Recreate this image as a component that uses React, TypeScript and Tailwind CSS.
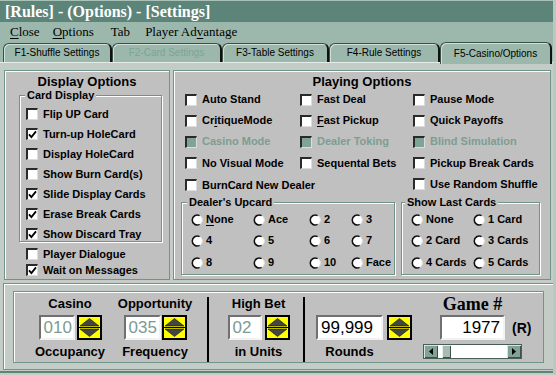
import React from "react";

const SANS = "font-['Liberation_Sans',Arial,sans-serif]";
const SERIF = "font-['Liberation_Serif','Times_New_Roman',serif]";

function CheckBox({ checked = false, disabled = false }: { checked?: boolean; disabled?: boolean }) {
  return (
    <span
      className={`flex h-[12px] w-[12px] shrink-0 items-center justify-center border-t-2 border-l-2 border-r border-b border-t-[#2a2a2a] border-l-[#2a2a2a] border-r-[#dcdcdc] border-b-[#dcdcdc] ${
        disabled ? "bg-[#7fa396]" : "bg-white"
      }`}
    >
      {checked && (
        <svg width="9" height="9" viewBox="0 0 9 9">
          <path d="M1 4.3 L3.4 7 L8 1.4" fill="none" stroke="#000" strokeWidth="1.8" />
        </svg>
      )}
    </span>
  );
}

function CheckRow({
  label,
  checked,
  disabled,
}: {
  label: React.ReactNode;
  checked?: boolean;
  disabled?: boolean;
}) {
  return (
    <div className="flex h-full items-center gap-[5px]">
      <CheckBox checked={checked} disabled={disabled} />
      <span
        className={`whitespace-nowrap text-[11px] font-bold leading-none ${
          disabled ? "text-[#7d9d92]" : "text-black"
        }`}
      >
        {label}
      </span>
    </div>
  );
}

function Radio({ label }: { label: React.ReactNode }) {
  return (
    <div className="flex h-full items-center gap-[3px]">
      <svg width="12" height="12" viewBox="0 0 12 12" className="shrink-0">
        <circle cx="6" cy="6" r="5.4" fill="#fff" />
        <path d="M9.6 2.2 A5 5 0 0 1 9.6 9.8" fill="none" stroke="#e4e4e4" strokeWidth="1" />
        <path d="M8.6 1.6 A5 5 0 1 0 8.6 10.4" fill="none" stroke="#111" strokeWidth="1.6" />
      </svg>
      <span className="whitespace-nowrap text-[11px] font-bold leading-none text-black">{label}</span>
    </div>
  );
}

function GroupBox({
  label,
  className,
  labelLeft = "left-[5px]",
  children,
}: {
  label: string;
  className?: string;
  labelLeft?: string;
  children: React.ReactNode;
}) {
  return (
    <div
      className={`relative border border-[#6f9589] shadow-[1px_1px_0_#ffffff,inset_1px_1px_0_#ffffff] ${className}`}
    >
      <span
        className={`absolute -top-[8px] ${labelLeft} bg-[#c0c0c0] px-[2px] text-[11px] font-bold leading-[14px] text-black`}
      >
        {label}
      </span>
      {children}
    </div>
  );
}

function Spinner() {
  return (
    <svg width="25" height="25" viewBox="0 0 25 25" className="shrink-0">
      <rect x="1" y="1" width="23" height="23" fill="#ffff00" stroke="#000" strokeWidth="2" />
      <polygon points="12.5,3.5 22,11 3,11" fill="#454545" stroke="#111" strokeWidth="0.6" />
      <line x1="2" y1="12.5" x2="23" y2="12.5" stroke="#000" strokeWidth="1" />
      <polygon points="3,14 22,14 12.5,21.5" fill="#454545" stroke="#111" strokeWidth="0.6" />
    </svg>
  );
}

function Field({
  value,
  width,
  dim,
  right,
}: {
  value: string;
  width: string;
  dim?: boolean;
  right?: boolean;
}) {
  return (
    <div
      className={`flex h-[25px] ${width} shrink-0 items-center border-2 border-t-[#707070] border-l-[#707070] border-r-[#f2f2f2] border-b-[#f2f2f2] bg-white px-[3px] text-[17px] font-normal leading-none ${
        right ? "justify-end" : "justify-start"
      } ${dim ? "text-[#7d9b92]" : "text-black"}`}
    >
      {value}
    </div>
  );
}

const tabs = [
  { label: "F1-Shuffle Settings", w: "w-[109px]" },
  { label: "F2-Card Settings", w: "w-[110px]", disabled: true },
  { label: "F3-Table Settings", w: "w-[107px]" },
  { label: "F4-Rule Settings", w: "w-[111px]" },
  { label: "F5-Casino/Options", w: "w-[112px]", active: true },
];

const U = ({ children }: { children: React.ReactNode }) => <span className="underline underline-offset-2">{children}</span>;

export default function App() {
  return (
    <div
      className={`flex h-[375px] w-[556px] flex-col overflow-hidden border-r-[3px] border-[#b6cac2] bg-[#9cb8ac] ${SANS}`}
    >
      {/* title bar */}
      <div className="flex h-[22px] shrink-0 items-center border-t border-[#a9c2b8] bg-[#5c8478] pl-[5px]">
        <span className={`${SERIF} text-[16px] font-bold leading-none text-white`}>
          [Rules] - (Options) - [Settings]
        </span>
      </div>

      {/* menu */}
      <div className={`flex h-[20px] shrink-0 items-center ${SERIF} text-[13px] text-black`}>
        <span className="ml-[10px]">
          <U>C</U>lose
        </span>
        <span className="ml-[13px]">
          <U>O</U>ptions
        </span>
        <span className="ml-[17px]">Tab</span>
        <span className="ml-[15px]">
          Player Ad<U>v</U>antage
        </span>
      </div>

      {/* tabs */}
      <div className="flex h-[20px] shrink-0 items-end pl-[3px]">
        {tabs.map((t) => (
          <div
            key={t.label}
            className={`relative flex ${t.w} items-center justify-center rounded-t-[6px] border-t border-l border-r-2 border-t-[#3c4e48] border-l-[#3c4e48] border-r-[#111111] bg-[#9cb8ac] text-[10px] leading-none shadow-[inset_1px_1px_0_#d2e0da] ${
              t.active ? "z-10 -mb-[2px] h-[22px]" : "h-[19px]"
            } ${t.disabled ? "text-[#7ea397]" : "text-black"}`}
          >
            {t.label}
          </div>
        ))}
      </div>

      {/* page */}
      <div className="flex flex-1 flex-col border-t border-[#e4ece8] bg-[#c4ccc8] pl-[4px] pr-[2px] pt-[7px]">
        <div className="flex h-[210px] shrink-0 gap-[3px]">
          {/* Display Options */}
          <div className="flex w-[166px] shrink-0 flex-col border border-[#6f9589] bg-[#c0c0c0] shadow-[inset_1px_1px_0_#ffffff]">
            <div className="mt-[4px] h-[14px] text-center text-[13px] font-bold leading-[14px] text-black">
              Display Options
            </div>
            <GroupBox label="Card Display" className="ml-[14px] mt-[6px] h-[147px] w-[143px]">
              <div className="flex flex-col pl-[6px] pt-[8px]">
                {[
                  ["Flip UP Card", false],
                  ["Turn-up HoleCard", true],
                  ["Display HoleCard", false],
                  ["Show Burn Card(s)", false],
                  ["Slide Display Cards", true],
                  ["Erase Break Cards", true],
                  ["Show Discard Tray", true],
                ].map(([l, c]) => (
                  <div key={l as string} className="h-[20px]">
                    <CheckRow label={l as string} checked={c as boolean} />
                  </div>
                ))}
              </div>
            </GroupBox>
            <div className="mt-[4px] flex flex-col pl-[21px]">
              <div className="h-[16px]">
                <CheckRow label="Player Dialogue" />
              </div>
              <div className="h-[16px]">
                <CheckRow label="Wait on Messages" checked />
              </div>
            </div>
          </div>

          {/* Playing Options */}
          <div className="flex flex-1 flex-col border border-[#6f9589] bg-[#c0c0c0] shadow-[inset_1px_1px_0_#ffffff]">
            <div className="mt-[4px] h-[14px] text-center text-[13px] font-bold leading-[14px] text-black">
              Playing Options
            </div>
            <div className="grid grid-cols-[115px_113px_1fr] grid-rows-[21px_21px_21px_22px_22px] pl-[11px]">
              <CheckRow label="Auto Stand" />
              <CheckRow label="Fast Deal" />
              <CheckRow label="Pause Mode" />
              <CheckRow
                label={
                  <>
                    Cr<U>i</U>tiqueMode
                  </>
                }
              />
              <CheckRow
                label={
                  <>
                    <U>F</U>ast Pickup
                  </>
                }
              />
              <CheckRow label="Quick Payoffs" />
              <CheckRow label="Casino Mode" disabled />
              <CheckRow label="Dealer Toking" disabled />
              <CheckRow label="Blind Simulation" disabled />
              <CheckRow label="No Visual Mode" />
              <CheckRow label="Sequental Bets" />
              <CheckRow label="Pickup Break Cards" />
              <div className="col-span-2">
                <CheckRow label="BurnCard New Dealer" />
              </div>
              <div className="-mt-[2px]">
                <CheckRow label="Use Random Shuffle" />
              </div>
            </div>
            <div className="mt-[6px] flex gap-[6px] pl-[7px]">
              <GroupBox label="Dealer's Upcard" className="h-[73px] w-[214px]">
                <div className="grid grid-cols-[62px_56px_42px_1fr] grid-rows-[21px_21px_23px] pl-[9px] pt-[6px]">
                  <Radio
                    label={
                      <>
                        <U>N</U>one
                      </>
                    }
                  />
                  <Radio label="Ace" />
                  <Radio label="2" />
                  <Radio label="3" />
                  <Radio label="4" />
                  <Radio label="5" />
                  <Radio label="6" />
                  <Radio label="7" />
                  <Radio label="8" />
                  <Radio label="9" />
                  <Radio label="10" />
                  <Radio label="Face" />
                </div>
              </GroupBox>
              <GroupBox label="Show Last Cards" labelLeft="left-[3px]" className="h-[73px] w-[139px]">
                <div className="grid grid-cols-[62px_1fr] grid-rows-[21px_21px_23px] pl-[9px] pt-[6px]">
                  <Radio label="None" />
                  <Radio label="1 Card" />
                  <Radio label="2 Card" />
                  <Radio label="3 Cards" />
                  <Radio label="4 Cards" />
                  <Radio label="5 Cards" />
                </div>
              </GroupBox>
            </div>
          </div>
        </div>

        {/* bottom frame */}
        <div className="-ml-[1px] mt-[3px] h-[87px] w-[551px] border border-[#6f9589] px-[9px] pt-[7px] shadow-[inset_1px_1px_0_#ffffff]">
          <div className="flex h-[72px] items-start border border-[#6f9589] bg-[#c0c0c0] pt-[5px] shadow-[inset_1px_1px_0_#ffffff] text-[13px] font-bold leading-[14px] text-black">
            {/* Casino occupancy */}
            <div className="ml-[23px] flex w-[66px] flex-col items-center">
              <div className="h-[14px]">Casino</div>
              <div className="mt-[4px] flex gap-[2px]">
                <Field value="010" width="w-[36px]" dim />
                <Spinner />
              </div>
              <div className="mt-[5px] h-[14px]">Occupancy</div>
            </div>
            {/* Opportunity */}
            <div className="ml-[15px] flex w-[74px] flex-col items-center">
              <div className="h-[14px]">Opportunity</div>
              <div className="mt-[4px] flex gap-[1px]">
                <Field value="035" width="w-[37px]" dim />
                <Spinner />
              </div>
              <div className="mt-[5px] h-[14px]">Frequency</div>
            </div>
            <div className="ml-[15px] h-[65px] w-[2px] bg-black" />
            {/* High bet */}
            <div className="ml-[19px] flex w-[61px] flex-col items-center">
              <div className="h-[14px] whitespace-nowrap">High Bet</div>
              <div className="mt-[4px] flex gap-[3px]">
                <Field value="02" width="w-[34px]" dim />
                <Spinner />
              </div>
              <div className="mt-[5px] h-[14px] whitespace-nowrap">in Units</div>
            </div>
            <div className="ml-[14px] h-[65px] w-[2px] bg-black" />
            {/* Rounds */}
            <div className="ml-[11px] flex flex-col">
              <div className="h-[14px]" />
              <div className="mt-[4px] flex gap-[4px]">
                <Field value="99,999" width="w-[67px]" />
                <Spinner />
              </div>
              <div className="mt-[5px] h-[14px] w-[67px] text-center">Rounds</div>
            </div>
            {/* Game # */}
            <div className="ml-[11px] flex flex-col">
              <div className={`ml-[17px] h-[14px] w-[65px] text-center ${SERIF} text-[18px] leading-[14px]`}>
                Game #
              </div>
              <div className="mt-[4px] flex items-center">
                <div className="ml-[17px]">
                  <Field value="1977" width="w-[65px]" right />
                </div>
                <span className="ml-[7px] text-[14px] font-bold">(R)</span>
              </div>
              <div className="mt-[4px] flex h-[15px] w-[99px] border border-[#4a5e58] bg-white">
                <div className="flex w-[14px] items-center justify-center bg-[#80a397] shadow-[inset_1px_1px_0_#d8e4df,inset_-1px_-1px_0_#3e524c]">
                  <svg width="4" height="7" viewBox="0 0 4 7">
                    <polygon points="4,0 0,3.5 4,7" fill="#000" />
                  </svg>
                </div>
                <div className="w-[4px]" />
                <div className="w-[9px] bg-[#a6bcb3] shadow-[inset_1px_1px_0_#e6eeea,inset_-1px_-1px_0_#3e524c]" />
                <div className="flex-1" />
                <div className="flex w-[14px] items-center justify-center bg-[#80a397] shadow-[inset_1px_1px_0_#d8e4df,inset_-1px_-1px_0_#3e524c]">
                  <svg width="4" height="7" viewBox="0 0 4 7">
                    <polygon points="0,0 4,3.5 0,7" fill="#000" />
                  </svg>
                </div>
              </div>
            </div>
          </div>
        </div>
        <div className="mt-[1px] h-[2px] -ml-[4px] w-[556px] bg-[#5c8478]" />
      </div>
    </div>
  );
}
